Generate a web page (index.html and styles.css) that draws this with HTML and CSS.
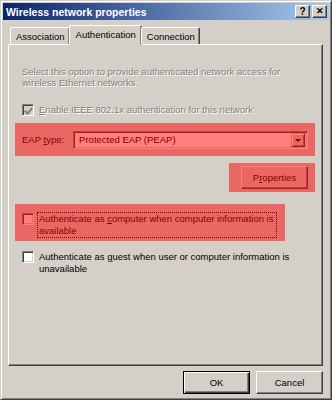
FILE: index.html
```html
<!DOCTYPE html>
<html lang="en">

<head>
    <meta charset="UTF-8">
    <meta name="viewport" content="width=device-width, initial-scale=1.0">
    <title>Wireless network properties</title>
    <link rel="stylesheet" href="styles.css">
</head>

<body>

    <div class="window">
        <div class="title-bar">
            <span class="title">Wireless network properties</span>
            <div class="caption-btns">
                <span class="cap-btn">?</span>
                <span class="cap-btn close">&#x2715;</span>
            </div>
        </div>

        <div class="content">
            <div class="tabs">
                <span class="tab">Association</span>
                <span class="tab active">Authentication</span>
                <span class="tab">Connection</span>
            </div>

            <div class="panel">
                <p class="intro">Select this option to provide authenticated network access for wireless Ethernet networks.</p>

                <div class="check-row disabled">
                    <span class="check checked"></span>
                    <span class="label"><u>E</u>nable IEEE 802.1x authentication for this network</span>
                </div>

                <div class="mark eap-row">
                    <span class="eap-label">EAP <u>t</u>ype:</span>
                    <div class="combo">
                        <span class="combo-text">Protected EAP (PEAP)</span>
                        <span class="combo-btn"></span>
                    </div>
                </div>

                <div class="prop-line">
                    <div class="mark prop-mark">
                        <span class="btn prop-btn">P<u>r</u>operties</span>
                    </div>
                </div>

                <div class="mark comp-mark">
                    <div class="check-row">
                        <span class="check"></span>
                        <span class="label focus">Authenticate as <u>c</u>omputer when computer information is available</span>
                    </div>
                </div>

                <div class="check-row guest">
                    <span class="check"></span>
                    <span class="label">Authenticate as <u>g</u>uest when user or computer information is unavailable</span>
                </div>
            </div>

            <div class="footer">
                <span class="btn ok">OK</span>
                <span class="btn">Cancel</span>
            </div>
        </div>
    </div>

</body>

</html>
```

FILE: styles.css
```css
* {
    margin: 0;
    padding: 0;
    box-sizing: border-box;
}

body {
    width: 332px;
    height: 400px;
    overflow: hidden;
    font-family: "Liberation Sans", Arial, sans-serif;
    font-size: 9px;
    color: #000;
    background: #d4d0c8;
}

u {
    text-decoration: underline;
}

.window {
    width: 332px;
    height: 400px;
    background: #d4d0c8;
    border: 1px solid;
    border-color: #d4d0c8 #404040 #404040 #d4d0c8;
    box-shadow: inset 1px 1px #fff, inset -1px -1px #808080;
    padding: 2px;
    display: flex;
    flex-direction: column;
}

/* title bar */
.title-bar {
    height: 17px;
    display: flex;
    align-items: center;
    justify-content: space-between;
    padding: 0 2px 0 3px;
    background: linear-gradient(to right, #0a246a, #a6caf0);
}

.title {
    color: #fff;
    font-weight: bold;
    font-size: 10.5px;
}

.caption-btns {
    display: flex;
    gap: 2px;
}

.cap-btn {
    width: 15px;
    height: 13px;
    background: #d4d0c8;
    border: 1px solid;
    border-color: #fff #404040 #404040 #fff;
    box-shadow: inset -1px -1px #808080;
    font-size: 10px;
    font-weight: bold;
    line-height: 11px;
    text-align: center;
}

.cap-btn.close {
    font-size: 9px;
}

/* body */
.content {
    flex: 1;
    display: flex;
    flex-direction: column;
    padding: 4px 6px 0 5px;
}

.tabs {
    display: flex;
    align-items: flex-end;
    height: 20px;
    padding-left: 2px;
    position: relative;
    z-index: 1;
}

.tab {
    height: 17px;
    padding: 3px 4px 0 5px;
    border: 1px solid;
    border-bottom: none;
    border-color: #fff #404040 #fff #fff;
    box-shadow: inset -1px 0 #808080;
    border-radius: 2px 2px 0 0;
    background: #d4d0c8;
    font-size: 9.5px;
}

.tab.active {
    height: 20px;
    margin: 0 -1px;
    padding: 3px 5px 0 6px;
    border-bottom: 1px solid #d4d0c8;
    margin-bottom: -1px;
}

.panel {
    height: 322px;
    border: 1px solid;
    border-color: #fff #404040 #404040 #fff;
    box-shadow: inset -1px -1px #808080;
    padding: 21px 0 0 13px;
}

.intro {
    color: #808080;
    text-shadow: 1px 1px #fff;
    line-height: 11px;
    width: 290px;
    font-size: 9.5px;
}

.check-row {
    display: flex;
    align-items: flex-start;
    gap: 5px;
    font-size: 9.5px;
    line-height: 12px;
}

.check-row.disabled {
    margin-top: 16px;
    color: #808080;
    text-shadow: 1px 1px #fff;
}

.check {
    flex: none;
    width: 12px;
    height: 12px;
    background: #fff;
    border: 1px solid;
    border-color: #808080 #fff #fff #808080;
    box-shadow: inset 1px 1px #404040, inset -1px -1px #d4d0c8;
    position: relative;
}

.check.checked {
    background: #d4d0c8;
}

.check.checked::after {
    content: "";
    position: absolute;
    left: 3px;
    top: 1px;
    width: 3px;
    height: 6px;
    border: solid #808080;
    border-width: 0 2px 2px 0;
    transform: rotate(40deg);
}

/* red annotation marks */
.mark {
    position: relative;
}

.mark::after {
    content: "";
    position: absolute;
    inset: 0;
    background: rgba(255, 0, 0, 0.5);
}

.eap-row {
    margin: 7px 7px 0 -7px;
    height: 33px;
    display: flex;
    align-items: center;
    padding: 0 7px;
    gap: 9px;
    font-size: 9.5px;
}

.combo {
    flex: 1;
    height: 18px;
    background: #fff;
    border: 1px solid;
    border-color: #808080 #fff #fff #808080;
    box-shadow: inset 1px 1px #404040, inset -1px -1px #d4d0c8;
    display: flex;
    align-items: center;
    justify-content: space-between;
    padding: 2px;
}

.combo-text {
    padding-left: 3px;
}

.combo-btn {
    width: 14px;
    height: 14px;
    background: #d4d0c8;
    border: 1px solid;
    border-color: #d4d0c8 #404040 #404040 #d4d0c8;
    box-shadow: inset 1px 1px #fff, inset -1px -1px #808080;
    position: relative;
}

.combo-btn::after {
    content: "";
    position: absolute;
    left: 3px;
    top: 5px;
    border: 3px solid transparent;
    border-top: 3px solid #000;
    border-width: 3px 3.5px 0;
}

.prop-line {
    display: flex;
    justify-content: flex-end;
    margin: 7px 7px 0 0;
}

.prop-mark {
    padding: 3px 7px 3px 12px;
}

.btn {
    display: inline-flex;
    align-items: center;
    justify-content: center;
    width: 67px;
    height: 23px;
    background: #d4d0c8;
    border: 1px solid;
    border-color: #fff #404040 #404040 #fff;
    box-shadow: inset -1px -1px #808080;
    font-size: 9.5px;
}

.comp-mark {
    margin: 12px 37px 0 -7px;
    height: 37px;
    padding: 9px 0 0 7px;
}

.focus {
    outline: 1px dotted #000;
    outline-offset: 0;
    width: 238px;
    padding-left: 1px;
    margin-left: -1px;
}

.guest {
    margin-top: 10px;
}

.footer {
    display: flex;
    justify-content: flex-end;
    gap: 6px;
    padding-top: 5px;
}

.btn.ok {
    border: 1px solid #000;
    box-shadow: inset 1px 1px #fff, inset -1px -1px #404040, inset -2px -2px #808080;
}
```
